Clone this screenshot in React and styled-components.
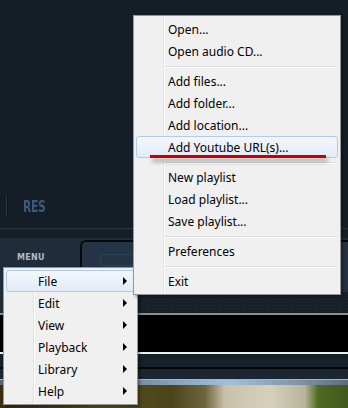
import styled, { createGlobalStyle } from "styled-components";

const GlobalStyle = createGlobalStyle`
  html, body {
    margin: 0;
    padding: 0;
    background: #151e27;
    overflow: hidden;
  }
`;

const Screen = styled.div`
  position: relative;
  width: 348px;
  height: 408px;
  display: flex;
  flex-direction: column;
  overflow: hidden;
  background: #151e27;
`;

const TopArea = styled.div`
  height: 228px;
  display: flex;
  align-items: flex-end;
  padding: 0 0 10px 6px;
  box-sizing: border-box;
`;

const ToolGroup = styled.div`
  display: flex;
  align-items: center;
  height: 23px;
`;

const Divider = styled.div`
  width: 1px;
  height: 23px;
  background: #2a343e;
  box-shadow: 1px 0 0 #0f151b;
`;

const ResLabel = styled.span`
  display: inline-block;
  margin-left: 16px;
  font-family: "DejaVu Sans", sans-serif;
  font-weight: bold;
  font-size: 15px;
  letter-spacing: -0.5px;
  color: #3b5a7b;
  transform: scaleX(0.72);
  transform-origin: left center;
`;

const Rule = styled.div`
  height: ${({ h }) => h}px;
  background: ${({ bg }) => bg};
`;

const Panel = styled.div`
  height: 75px;
  display: flex;
  background: #1f2c3a;
`;

const PanelSide = styled.div`
  width: 80px;
  display: flex;
  justify-content: center;
  padding: 15px 18px 0 0;
  box-sizing: border-box;
`;

const MenuLabel = styled.span`
  font-family: "DejaVu Sans", sans-serif;
  font-weight: bold;
  font-size: 8px;
  letter-spacing: 0.3px;
  color: #b4bcc4;
  height: 10px;
`;

const Tab = styled.div`
  flex: 1;
  margin-top: 2px;
  border-top: 2px solid #05080b;
  border-left: 2px solid #05080b;
  border-radius: 6px 0 0 0;
  display: flex;
  flex-direction: column;
  overflow: hidden;
`;

const TabHead = styled.div`
  height: 50px;
  background: #233446;
  padding: 12px 0 0 18px;
  box-sizing: border-box;
`;

const TabField = styled.div`
  width: 160px;
  height: 10px;
  border: 1px solid #2c4054;
`;

const TabBody = styled.div`
  flex: 1;
  background-color: #172029;
  background-image: radial-gradient(#1f2b37 0.8px, transparent 1px);
  background-size: 3px 3px;
`;

const PhotoStrip = styled.div`
  height: 23px;
  background: linear-gradient(
    to right,
    #3b2c14 0px,
    #4a3a18 60px,
    #58521f 100px,
    #4a4418 170px,
    #6e6440 205px,
    #c9c2aa 225px,
    #d6d0bc 270px,
    #b8b49a 305px,
    #4f6a22 318px,
    #3f5a1c 348px
  );
  filter: blur(0.6px);
`;

const GlowLine = styled.div`
  height: 6px;
  background: linear-gradient(
    to right,
    #54687a 0px,
    #6d8498 120px,
    #a2c0dc 230px,
    #7d93a6 300px,
    #5c6e7e 348px
  );
  border-top: 1px solid #a9b6c2;
  box-sizing: border-box;
`;

const Menu = styled.div`
  position: absolute;
  left: ${({ x }) => x}px;
  top: ${({ y }) => y}px;
  width: ${({ w }) => w}px;
  z-index: ${({ z }) => z};
  box-sizing: border-box;
  border: 1px solid #979797;
  padding: 2px;
  background: linear-gradient(
    to right,
    #f0f0f0 29px,
    #e2e3e3 29px,
    #e2e3e3 30px,
    #ffffff 30px,
    #ffffff 31px,
    #f0f0f0 31px
  );
  box-shadow: 2px 2px 3px rgba(0, 0, 0, 0.35);
  font-family: "Noto Sans", "Noto Sans CJK KR", sans-serif;
  font-size: 12px;
  color: #000;
`;

const Item = styled.div`
  height: 22px;
  display: flex;
  align-items: center;
  padding-left: 32px;
  box-sizing: border-box;
  border: 1px solid transparent;
  border-radius: 3px;
  white-space: nowrap;
  ${({ active }) =>
    active &&
    `
    border-color: #aecbf0;
    background: linear-gradient(#f3f7fc, #e3ebf7);
  `}
`;

const ItemText = styled.span`
  margin-left: -1px;
`;

const Arrow = styled.span`
  margin-left: auto;
  margin-right: 7px;
  width: 0;
  height: 0;
  border-top: 4px solid transparent;
  border-bottom: 4px solid transparent;
  border-left: 4px solid #000;
`;

const Separator = styled.div`
  height: 8px;
  display: flex;
  align-items: center;
  margin: 0 1px 0 27px;

  &::after {
    content: "";
    flex: 1;
    height: 1px;
    background: #e0e0e0;
    box-shadow: 0 1px 0 #ffffff;
  }
`;

const Annotation = styled.div`
  position: absolute;
  left: 150px;
  top: 155px;
  width: 176px;
  height: 3px;
  background: #c40000;
  z-index: 5;
  box-shadow: 2px 4px 4px rgba(0, 0, 0, 0.35);
`;

const fileItems = [
  "Open...",
  "Open audio CD...",
  "-",
  "Add files...",
  "Add folder...",
  "Add location...",
  "Add Youtube URL(s)...",
  "-",
  "New playlist",
  "Load playlist...",
  "Save playlist...",
  "-",
  "Preferences",
  "-",
  "Exit",
];

const mainItems = ["File", "Edit", "View", "Playback", "Library", "Help"];

const App = () => {
  return (
    <>
      <GlobalStyle />
      <Screen>
        <TopArea>
          <ToolGroup>
            <Divider />
            <ResLabel>RES</ResLabel>
          </ToolGroup>
        </TopArea>
        <Rule h={1} bg="#2b3540" />
        <Rule h={9} bg="#161f28" />
        <Panel>
          <PanelSide>
            <MenuLabel>MENU</MenuLabel>
          </PanelSide>
          <Tab>
            <TabHead>
              <TabField />
            </TabHead>
            <TabBody />
          </Tab>
        </Panel>
        <Rule h={2} bg="#8b9096" />
        <Rule h={37} bg="#000000" />
        <Rule h={2} bg="#eeeeee" />
        <Rule h={13} bg="#17212b" />
        <Rule h={2} bg="#040607" />
        <Rule h={10} bg="#1b2631" />
        <GlowLine />
        <PhotoStrip />

        <Menu x={3} y={267} w={135} z={2}>
          {mainItems.map((label, i) => (
            <Item key={label} active={i === 0}>
              <ItemText>{label}</ItemText>
              <Arrow />
            </Item>
          ))}
        </Menu>

        <Menu x={133} y={15} w={208} z={3}>
          {fileItems.map((label, i) =>
            label === "-" ? (
              <Separator key={i} />
            ) : (
              <Item key={i} active={label.startsWith("Add Youtube")}>
                <ItemText>{label}</ItemText>
              </Item>
            )
          )}
        </Menu>
        <Annotation />
      </Screen>
    </>
  );
};

export default App;
